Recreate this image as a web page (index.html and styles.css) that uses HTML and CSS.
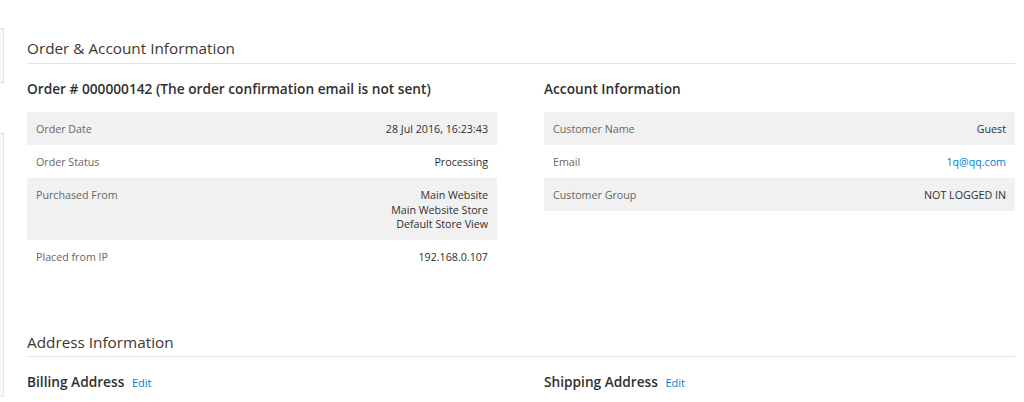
FILE: index.html
```html
<!DOCTYPE html>
<html lang="en">
<head>
<meta charset="utf-8">
<title>Order View</title>
<link rel="stylesheet" href="styles.css">
</head>
<body>
<div class="page">
  <aside class="side">
    <div class="side-box side-box-top"></div>
    <div class="side-box side-box-bottom"></div>
  </aside>
  <main class="main">
    <section class="section">
      <h2 class="section-title">Order &amp; Account Information</h2>
      <div class="cols">
        <div class="col">
          <h3 class="block-title">Order # 000000142 (The order confirmation email is not sent)</h3>
          <table class="info">
            <tr><th>Order Date</th><td>28 Jul 2016, 16:23:43</td></tr>
            <tr><th>Order Status</th><td>Processing</td></tr>
            <tr><th>Purchased From</th><td class="multi">Main Website<br>Main Website Store<br>Default Store View</td></tr>
            <tr><th>Placed from IP</th><td>192.168.0.107</td></tr>
          </table>
        </div>
        <div class="col">
          <h3 class="block-title">Account Information</h3>
          <table class="info">
            <tr><th>Customer Name</th><td>Guest</td></tr>
            <tr><th>Email</th><td><a href="#" class="link">1q@qq.com</a></td></tr>
            <tr><th>Customer Group</th><td>NOT LOGGED IN</td></tr>
          </table>
        </div>
      </div>
    </section>
    <section class="section section-address">
      <h2 class="section-title">Address Information</h2>
      <div class="cols">
        <div class="col">
          <h3 class="block-title">Billing Address <a href="#" class="edit">Edit</a></h3>
        </div>
        <div class="col">
          <h3 class="block-title">Shipping Address <a href="#" class="edit">Edit</a></h3>
        </div>
      </div>
    </section>
  </main>
</div>
</body>
</html>
```

FILE: styles.css
```css
html, body {
  margin: 0;
  padding: 0;
  background: #ffffff;
}
body {
  font-family: "Open Sans", "Liberation Sans", sans-serif;
  color: #303030;
  overflow: hidden;
}
.page {
  display: flex;
  align-items: flex-start;
}
.side {
  width: 4px;
  flex: none;
  display: flex;
  flex-direction: column;
  padding-top: 28px;
  gap: 50px;
}
.side-box {
  background: #f8f8f8;
  border: 1px solid #e3e3e3;
  border-left: none;
}
.side-box-top {
  height: 53px;
}
.side-box-bottom {
  height: 262px;
}
.main {
  margin-left: 23px;
  width: 988px;
  padding-top: 38px;
}
.section-title {
  margin: 0;
  font-size: 15.3px;
  font-weight: 400;
  line-height: 20px;
  color: #41362f;
  padding-bottom: 5px;
  border-bottom: 1px solid #e3e3e3;
}
.section-address {
  margin-top: 59px;
}
.section-address .section-title {
  padding-bottom: 4px;
}
.cols {
  display: grid;
  grid-template-columns: 470px 471px;
  column-gap: 47px;
}
.block-title {
  margin: 16px 0 14px;
  font-size: 13.7px;
  font-weight: 600;
  line-height: 18px;
  color: #303030;
}
.info {
  width: 100%;
  border-collapse: collapse;
  font-size: 10.7px;
  line-height: 15px;
}
.info tr:nth-child(odd) {
  background: #f1f1f1;
}
.info th,
.info td {
  padding: 10px 9px 8px;
  vertical-align: top;
}
.info th {
  text-align: left;
  font-weight: 400;
  color: #666666;
}
.info td {
  text-align: right;
  color: #303030;
}
.info td.multi {
  line-height: 14.7px;
}
.link,
.edit {
  color: #007bdb;
  text-decoration: none;
}
.edit {
  font-size: 11px;
  font-weight: 400;
  margin-left: 4px;
}
```
